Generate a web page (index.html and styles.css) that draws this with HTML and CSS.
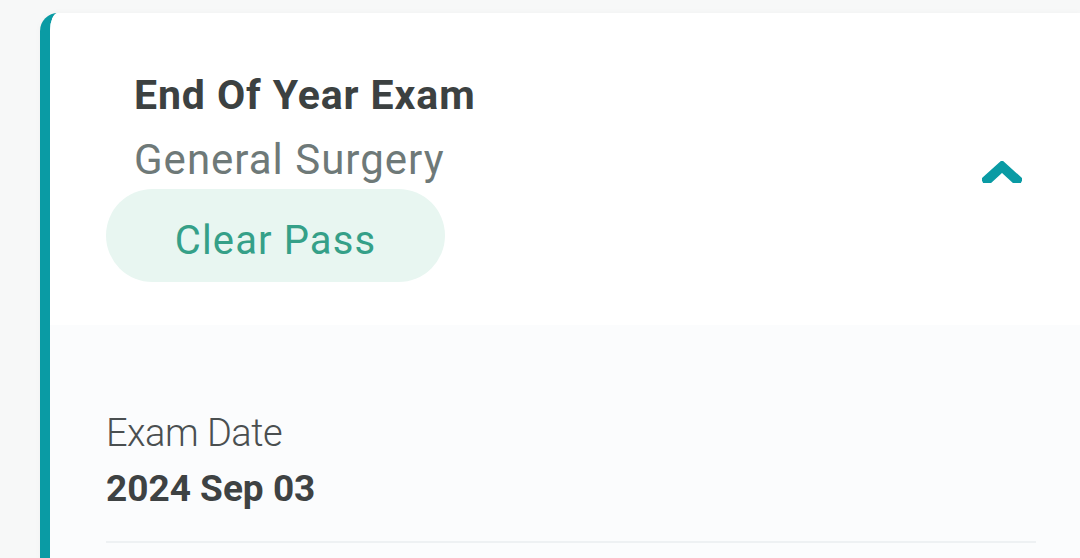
FILE: index.html
```html
<!DOCTYPE html>
<html lang="en">
<head>
<meta charset="utf-8">
<title>Exam Result</title>
<link rel="stylesheet" href="styles.css">
</head>
<body>
<main class="page">
  <section class="card">
    <header class="card-head">
      <div class="head-info">
        <h2 class="exam-title">End Of Year Exam</h2>
        <p class="exam-subject">General Surgery</p>
        <span class="badge">Clear Pass</span>
      </div>
      <button class="toggle" aria-label="Collapse">
        <svg class="chevron" width="40" height="22" viewBox="0 0 40 22">
          <polygon points="20,0 40,18 38,22 32,22 20,11 8,22 2,22 0,18" />
        </svg>
      </button>
    </header>
    <div class="card-body">
      <div class="field">
        <div class="field-label">Exam Date</div>
        <div class="field-value">2024 Sep 03</div>
      </div>
      <div class="divider"></div>
    </div>
  </section>
</main>
</body>
</html>
```

FILE: styles.css
```css
html, body {
  margin: 0;
  padding: 0;
}

body {
  background: #f7f8f8;
  font-family: Roboto, "Noto Sans", sans-serif;
  width: 1080px;
  height: 558px;
  overflow: hidden;
}

.page {
  padding: 13px 0 0 40px;
}

.card {
  background: #fbfcfd;
  border-left: 10px solid #0a9ba4;
  border-top-left-radius: 18px;
  overflow: hidden;
  box-shadow: 0 0 6px rgba(0, 0, 0, 0.03);
  height: 560px;
}

.card-head {
  background: #ffffff;
  display: flex;
  justify-content: space-between;
  padding: 58px 58px 43px 56px;
}

.head-info {
  display: flex;
  flex-direction: column;
  align-items: flex-start;
}

.exam-title {
  margin: 0 0 0 28px;
  font-size: 41px;
  line-height: 48px;
  font-weight: 700;
  letter-spacing: 0.9px;
  color: #3c4141;
}

.exam-subject {
  margin: 16px 0 0 28px;
  font-size: 42px;
  line-height: 50px;
  font-weight: 400;
  letter-spacing: 1px;
  color: #6e7978;
}

.badge {
  margin-top: 4px;
  width: 339px;
  box-sizing: border-box;
  padding: 27px 0 16px;
  text-align: center;
  font-size: 40px;
  line-height: 50px;
  letter-spacing: 1.1px;
  color: #35a088;
  background: #e8f6f1;
  border-radius: 47px;
}

.toggle {
  border: 0;
  background: transparent;
  padding: 0;
  margin-top: 90px;
  align-self: flex-start;
  display: flex;
}

.chevron {
  display: block;
  fill: #0a9ba4;
  stroke: #0a9ba4;
  stroke-width: 1.5;
  stroke-linejoin: round;
}

.card-body {
  padding: 85px 44px 0 56px;
}

.field-label {
  font-size: 38px;
  line-height: 46px;
  font-weight: 300;
  letter-spacing: -0.5px;
  color: #4a4f50;
}

.field-value {
  margin-top: 11px;
  font-size: 37px;
  line-height: 44px;
  font-weight: 700;
  color: #3e4243;
}

.divider {
  margin-top: 30px;
  height: 2px;
  background: #eef1f3;
}
```
